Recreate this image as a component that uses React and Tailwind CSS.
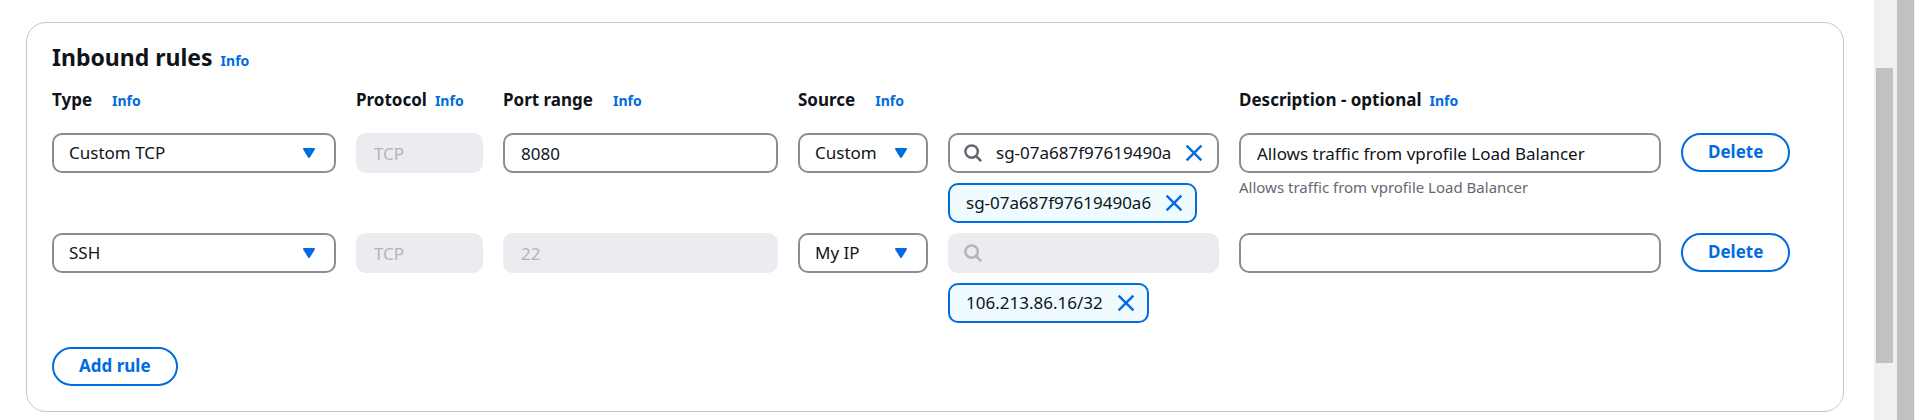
import React from 'react';

const COLUMNS =
  'grid grid-cols-[minmax(0,284fr)_minmax(0,127fr)_minmax(0,275fr)_minmax(0,130fr)_minmax(0,271fr)_minmax(0,422fr)_137px] gap-x-5 items-start';
const FIELD =
  'h-10 w-full min-w-0 rounded-[10px] border-2 border-[#8c8c94] bg-white px-4 text-[17px] text-[#0f141a] outline-none focus:border-[#006ce0] disabled:border-[#ebebf0] disabled:bg-[#ebebf0] disabled:text-[#b4b4bb]';

const RULES = [
  {
    type: 'Custom TCP',
    protocol: 'TCP',
    port: '8080',
    portLocked: false,
    source: 'Custom',
    search: 'sg-07a687f97619490a6',
    searchLocked: false,
    tag: 'sg-07a687f97619490a6',
    description: 'Allows traffic from vprofile Load Balancer',
    hint: 'Allows traffic from vprofile Load Balancer',
  },
  {
    type: 'SSH',
    protocol: 'TCP',
    port: '22',
    portLocked: true,
    source: 'My IP',
    search: '',
    searchLocked: true,
    tag: '106.213.86.16/32',
    description: '',
    hint: '',
  },
];

function InfoLink() {
  return (
    <a href="#info" className="text-[14px] font-bold text-[#006ce0] hover:underline">
      Info
    </a>
  );
}

function ColumnHeader({ label, target, wide }) {
  return (
    <div className={wide ? 'flex items-baseline gap-5 whitespace-nowrap' : 'flex items-baseline gap-2 whitespace-nowrap'}>
      <label htmlFor={target} className="text-[17px] font-bold">
        {label}
      </label>
      <InfoLink />
    </div>
  );
}

function Select({ id, label, value, options }) {
  return (
    <div className="grid items-center">
      <select
        id={id}
        aria-label={label}
        defaultValue={value}
        className="col-start-1 row-start-1 h-10 w-full min-w-0 appearance-none rounded-[10px] border-2 border-[#8c8c94] bg-white pr-9 pb-px pl-[15px] text-[17px] text-[#0f141a] outline-none focus:border-[#006ce0]"
      >
        {options.map((option) => (
          <option key={option}>{option}</option>
        ))}
      </select>
      <svg
        viewBox="0 0 12 10"
        className="pointer-events-none col-start-1 row-start-1 mr-[21px] h-[10px] w-3 justify-self-end"
        aria-hidden="true"
      >
        <path d="M1 1h10L6 9z" fill="#006ce0" stroke="#006ce0" strokeWidth="2" strokeLinejoin="round" />
      </svg>
    </div>
  );
}

function SearchIcon({ muted }) {
  return (
    <svg
      viewBox="0 0 18 18"
      className={muted ? 'size-[18px] shrink-0 text-[#b4b4bb]' : 'size-[18px] shrink-0 text-[#656871]'}
      fill="none"
      stroke="currentColor"
      strokeWidth="2.5"
      aria-hidden="true"
    >
      <circle cx="7.6" cy="7.6" r="6.2" />
      <path d="m12 12 5.2 5.2" />
    </svg>
  );
}

function CloseIcon() {
  return (
    <svg
      viewBox="0 0 18 18"
      className="size-[18px]"
      fill="none"
      stroke="#006ce0"
      strokeWidth="2.4"
      aria-hidden="true"
    >
      <path d="m1.6 1.6 14.8 14.8M16.4 1.6 1.6 16.4" />
    </svg>
  );
}

function SourceSearch({ id, value, locked }) {
  return (
    <div
      className={
        locked
          ? 'flex h-10 items-center rounded-[10px] border-2 border-[#ebebf0] bg-[#ebebf0] px-[14px]'
          : 'flex h-10 items-center rounded-[10px] border-2 border-[#8c8c94] bg-white px-[14px]'
      }
    >
      <SearchIcon muted={locked} />
      <input
        id={id}
        aria-label="Source search"
        defaultValue={value}
        disabled={locked}
        className="ml-[14px] min-w-0 flex-1 bg-transparent text-[17px] outline-none"
      />
      {!locked && (
        <button type="button" aria-label="Clear source" className="ml-[13px]">
          <CloseIcon />
        </button>
      )}
    </div>
  );
}

function OutlineButton({ children }) {
  return (
    <button
      type="button"
      className="h-[39px] rounded-full border-2 border-[#006ce0] bg-white px-[25px] pb-px text-[17px] font-bold whitespace-nowrap text-[#006ce0] hover:bg-[#f0fbff]"
    >
      {children}
    </button>
  );
}

function RuleRow({ rule, index }) {
  return (
    <div className={COLUMNS}>
      <Select id={`type-${index}`} label="Type" value={rule.type} options={['Custom TCP', 'SSH']} />
      <input id={`protocol-${index}`} aria-label="Protocol" className={FIELD} defaultValue={rule.protocol} disabled />
      <input
        id={`port-${index}`}
        aria-label="Port range"
        className={FIELD}
        defaultValue={rule.port}
        disabled={rule.portLocked}
      />
      <Select id={`source-${index}`} label="Source" value={rule.source} options={['Custom', 'My IP']} />
      <div className="flex flex-col gap-[10px]">
        <SourceSearch id={`search-${index}`} value={rule.search} locked={rule.searchLocked} />
        <div className="flex h-10 items-center gap-[14px] self-start rounded-[10px] border-2 border-[#006ce0] bg-[#f0fbff] pr-3 pl-4 text-[17px]">
          <span className="pb-px">{rule.tag}</span>
          <button type="button" aria-label={`Remove ${rule.tag}`}>
            <CloseIcon />
          </button>
        </div>
      </div>
      <div className="flex flex-col gap-1">
        <input
          id={`description-${index}`}
          aria-label="Description"
          className={FIELD}
          defaultValue={rule.description}
        />
        {rule.hint && <p className="text-[15px] leading-5 text-[#656871]">{rule.hint}</p>}
      </div>
      <div>
        <OutlineButton>Delete</OutlineButton>
      </div>
    </div>
  );
}

export default function App() {
  return (
    <div className="flex min-h-screen bg-white font-['Noto_Sans','Open_Sans',sans-serif] text-[#0f141a]">
      <main className="min-w-0 flex-1 pt-[22px] pr-[30px] pb-2 pl-[26px]">
        <section className="rounded-[20px] border border-[#c6c6cd] px-[25px] pt-[19px] pb-[25px]">
          <h2 className="flex items-baseline gap-2 text-[23px] leading-[30px] font-bold">
            Inbound rules <InfoLink />
          </h2>
          <div className={`${COLUMNS} mt-[11px] leading-[26px]`}>
            <ColumnHeader label="Type" target="type-0" wide />
            <ColumnHeader label="Protocol" target="protocol-0" />
            <ColumnHeader label="Port range" target="port-0" wide />
            <ColumnHeader label="Source" target="source-0" wide />
            <div />
            <ColumnHeader label="Description - optional" target="description-0" />
          </div>
          <div className="mt-[19px] flex flex-col gap-[10px]">
            {RULES.map((rule, index) => (
              <RuleRow key={rule.tag} rule={rule} index={index} />
            ))}
          </div>
          <div className="mt-6">
            <OutlineButton>Add rule</OutlineButton>
          </div>
        </section>
      </main>
      <div className="flex w-[23px] shrink-0 flex-col bg-[#f0f0f0] pr-1 pl-[2px]" aria-hidden="true">
        <div className="mt-[68px] h-[295px] bg-[#c1c1c1]" />
      </div>
      <div className="w-[18px] shrink-0 border-r border-[#f0f0f0] bg-[#c1c1c1]" aria-hidden="true" />
    </div>
  );
}
